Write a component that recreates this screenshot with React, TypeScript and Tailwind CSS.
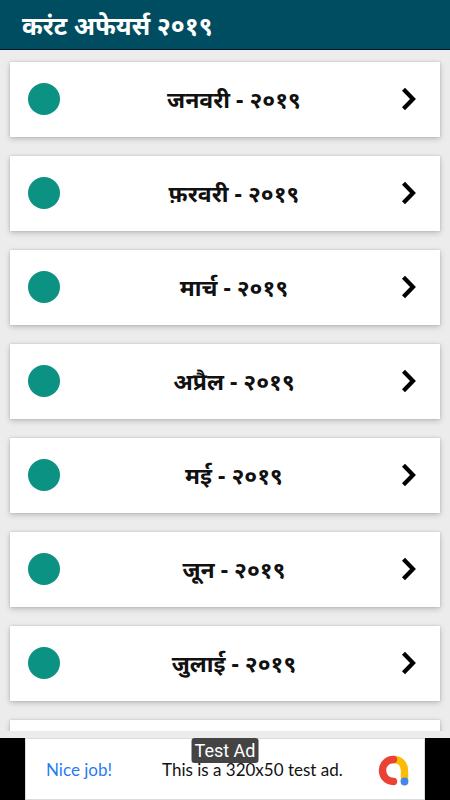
const months = ["जनवरी", "फ़रवरी", "मार्च", "अप्रैल", "मई", "जून", "जुलाई", "अगस्त"];

function Chevron() {
  return (
    <svg width="18" height="24" viewBox="0 0 18 24" fill="none" stroke="#000" strokeWidth="4.2" aria-hidden="true">
      <path d="M3.5 2.2 L13 12 L3.5 21.8" />
    </svg>
  );
}

function MonthCard({ month }: { month: string }) {
  return (
    <li>
      <button
        type="button"
        className="flex h-[75px] w-full items-center bg-white pr-[22px] pb-px pl-[18px] shadow-[0_2px_6px_rgba(0,0,0,0.2),0_0_2px_rgba(0,0,0,0.16)]"
      >
        <span className="size-8 shrink-0 rounded-full bg-[#0b9282]" />
        <span className="flex-1 pl-2 text-center text-[23px] leading-8 font-bold text-[#111]">{month} - २०१९</span>
        <Chevron />
      </button>
    </li>
  );
}

function AdLogo() {
  return (
    <svg width="31" height="31" viewBox="0 0 31 31" fill="none" strokeLinecap="round" strokeWidth="7.4" aria-hidden="true">
      <path d="M15.5 4.5 C22 4.5 26.5 9 26.5 15.5 V26" stroke="#fbbc04" />
      <path d="M15.5 4.5 C9 4.5 4.5 9.5 4.5 15.5 C4.5 21.5 9 26.5 15.5 26.5" stroke="#ea4335" />
      <circle cx="26.5" cy="26.5" r="3.9" fill="#4285f4" />
    </svg>
  );
}

export default function App() {
  return (
    <div className="flex h-screen flex-col bg-[#ececec] font-['Noto_Sans','Noto_Sans_Devanagari',sans-serif]">
      <header className="flex h-[50px] shrink-0 items-center border-b border-[#001c2c] bg-[#004d61] px-[22px]">
        <h1 className="text-[25px] leading-8 font-bold text-white">करंट अफेयर्स २०१९</h1>
      </header>
      <main className="min-h-0 flex-1 overflow-hidden px-[10px] pt-3">
        <ul className="flex flex-col gap-[19px]">
          {months.map((month) => (
            <MonthCard key={month} month={month} />
          ))}
        </ul>
      </main>
      <footer className="shrink-0 bg-[#ececec] pt-[7px]">
        <div className="bg-black px-[25px]">
          <div className="relative flex h-[62px] items-center border border-[#d3dde2] bg-white pt-0.5 pr-[15px] pl-5 font-['Lato',sans-serif] text-[17px] leading-6">
            <a href="#ad" className="w-[116px] text-[#1f7cf5]">Nice job!</a>
            <p className="flex-1 text-[#111]">This is a 320x50 test ad.</p>
            <AdLogo />
            <span className="absolute -top-px left-1/2 h-[25px] -translate-x-1/2 rounded-[3px] bg-[#444] px-[3px] font-['Roboto',sans-serif] text-lg leading-[25px] whitespace-nowrap text-white">
              Test Ad
            </span>
          </div>
        </div>
      </footer>
    </div>
  );
}
